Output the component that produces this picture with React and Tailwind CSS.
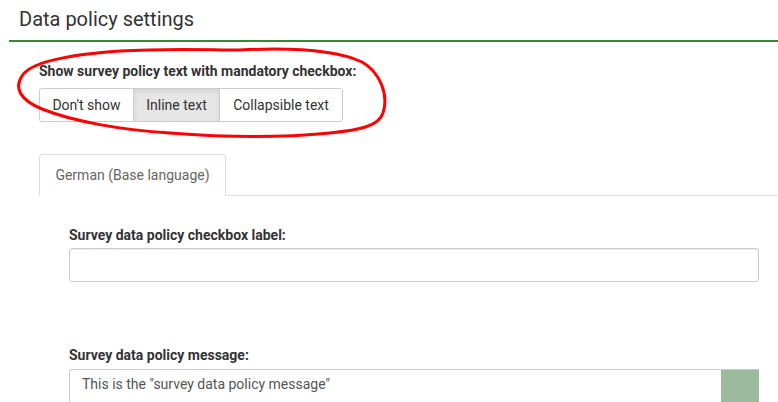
export default function App() {
  return (
    <div className="relative w-[778px] h-[402px] overflow-hidden bg-white text-[#333]" style={{ fontFamily: "Roboto, 'Liberation Sans', sans-serif" }}>
      <div className="ml-[9px] h-[42px] border-b-2 border-[#33883a] pl-[10px] pt-[6px]">
        <h2 className="text-[20px] leading-[26px] font-normal text-[#333]">Data policy settings</h2>
      </div>
      <div className="pl-[39px]">
        <div className="mt-[21px] text-[14px] font-bold leading-[16px] text-[#333]">Show survey policy text with mandatory checkbox:</div>
        <div className="mt-[9px] flex w-fit rounded-[3px] border border-[#ccc] text-[14px] text-[#333]">
          <div className="flex h-[32px] w-[93px] items-center justify-center">Don't show</div>
          <div className="flex h-[32px] w-[87px] items-center justify-center border-x border-[#ccc] bg-[#e6e6e6] shadow-[inset_0_3px_5px_rgba(0,0,0,0.08)]">Inline text</div>
          <div className="flex h-[32px] w-[122px] items-center justify-center">Collapsible text</div>
        </div>
        <div className="mt-[32px] flex">
          <div className="flex h-[42px] w-[187px] items-center justify-center rounded-t-[4px] border border-b-0 border-[#ddd] text-[14px] text-[#666]">German (Base language)</div>
          <div className="flex-1 border-b border-[#ddd]"></div>
        </div>
        <div className="pl-[30px] pr-[19px]">
          <div className="mt-[31px] text-[14px] font-bold leading-[16px] text-[#333]">Survey data policy checkbox label:</div>
          <div className="mt-[5px] h-[34px] rounded-[3px] border border-[#ccc] shadow-[inset_0_1px_1px_rgba(0,0,0,0.075)]"></div>
          <div className="mt-[65px] text-[14px] font-bold leading-[16px] text-[#333]">Survey data policy message:</div>
          <div className="mt-[6px] flex h-[40px] rounded-tl-[3px] border border-r-0 border-[#ccc]">
            <div className="flex-1 pl-[12px] pt-[4px] text-[14px] text-[#555]">This is the "survey data policy message"</div>
            <div className="w-[38px] bg-[#9cbb9c]"></div>
          </div>
        </div>
      </div>
      <svg className="pointer-events-none absolute left-0 top-0" width="778" height="402">
        <path
          d="M 240 50 C 300 47, 340 52, 362 62 C 380 72, 389 95, 383 113 C 379 126, 360 130, 330 133 C 280 138, 220 137, 170 133 C 120 130, 72 121, 42 109 C 20 100, 14 88, 22 76 C 30 63, 62 55, 120 51 C 170 48, 210 50, 240 50"
          fill="none"
          stroke="#ff0000"
          strokeWidth="3"
          strokeLinecap="round"
        />
      </svg>
    </div>
  );
}
